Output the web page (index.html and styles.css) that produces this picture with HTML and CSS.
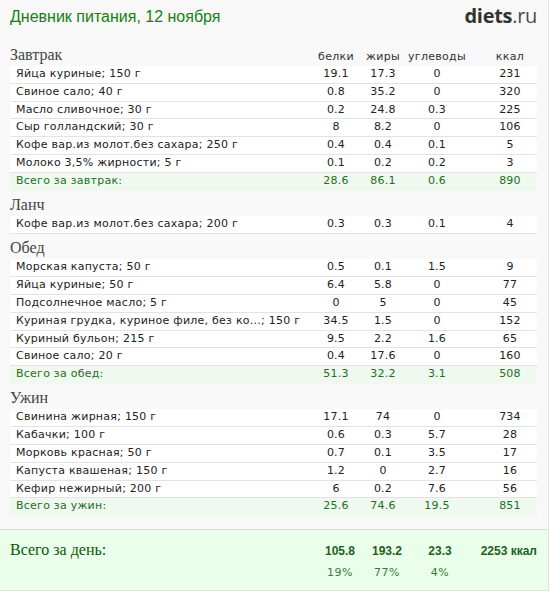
FILE: index.html
```html
<!DOCTYPE html>
<html lang="ru">
<head>
<meta charset="utf-8">
<title>Дневник питания</title>
<link rel="stylesheet" href="styles.css">
</head>
<body>
<div class="page">
  <header class="top">
    <h1 class="title">Дневник питания, 12 ноября</h1>
    <div class="logo"><b>diets</b>.ru</div>
  </header>

  <section class="meal">
    <div class="meal-head">
      <span class="meal-name">Завтрак</span>
      <span class="col">белки</span><span class="col">жиры</span><span class="col">углеводы</span><span class="col col-k">ккал</span>
    </div>
    <div class="row"><span class="name">Яйца куриные; 150 г</span><span class="col">19.1</span><span class="col">17.3</span><span class="col">0</span><span class="col col-k">231</span></div>
    <div class="row"><span class="name">Свиное сало; 40 г</span><span class="col">0.8</span><span class="col">35.2</span><span class="col">0</span><span class="col col-k">320</span></div>
    <div class="row"><span class="name">Масло сливочное; 30 г</span><span class="col">0.2</span><span class="col">24.8</span><span class="col">0.3</span><span class="col col-k">225</span></div>
    <div class="row"><span class="name">Сыр голландский; 30 г</span><span class="col">8</span><span class="col">8.2</span><span class="col">0</span><span class="col col-k">106</span></div>
    <div class="row"><span class="name">Кофе вар.из молот.без сахара; 250 г</span><span class="col">0.4</span><span class="col">0.4</span><span class="col">0.1</span><span class="col col-k">5</span></div>
    <div class="row"><span class="name">Молоко 3,5% жирности; 5 г</span><span class="col">0.1</span><span class="col">0.2</span><span class="col">0.2</span><span class="col col-k">3</span></div>
    <div class="row total"><span class="name">Всего за завтрак:</span><span class="col">28.6</span><span class="col">86.1</span><span class="col">0.6</span><span class="col col-k">890</span></div>
  </section>

  <section class="meal meal-gap">
    <div class="meal-head"><span class="meal-name">Ланч</span></div>
    <div class="row"><span class="name">Кофе вар.из молот.без сахара; 200 г</span><span class="col">0.3</span><span class="col">0.3</span><span class="col">0.1</span><span class="col col-k">4</span></div>
  </section>

  <section class="meal meal-gap">
    <div class="meal-head"><span class="meal-name">Обед</span></div>
    <div class="row"><span class="name">Морская капуста; 50 г</span><span class="col">0.5</span><span class="col">0.1</span><span class="col">1.5</span><span class="col col-k">9</span></div>
    <div class="row"><span class="name">Яйца куриные; 50 г</span><span class="col">6.4</span><span class="col">5.8</span><span class="col">0</span><span class="col col-k">77</span></div>
    <div class="row"><span class="name">Подсолнечное масло; 5 г</span><span class="col">0</span><span class="col">5</span><span class="col">0</span><span class="col col-k">45</span></div>
    <div class="row"><span class="name">Куриная грудка, куриное филе, без ко...; 150 г</span><span class="col">34.5</span><span class="col">1.5</span><span class="col">0</span><span class="col col-k">152</span></div>
    <div class="row"><span class="name">Куриный бульон; 215 г</span><span class="col">9.5</span><span class="col">2.2</span><span class="col">1.6</span><span class="col col-k">65</span></div>
    <div class="row"><span class="name">Свиное сало; 20 г</span><span class="col">0.4</span><span class="col">17.6</span><span class="col">0</span><span class="col col-k">160</span></div>
    <div class="row total"><span class="name">Всего за обед:</span><span class="col">51.3</span><span class="col">32.2</span><span class="col">3.1</span><span class="col col-k">508</span></div>
  </section>

  <section class="meal meal-gap">
    <div class="meal-head"><span class="meal-name">Ужин</span></div>
    <div class="row"><span class="name">Свинина жирная; 150 г</span><span class="col">17.1</span><span class="col">74</span><span class="col">0</span><span class="col col-k">734</span></div>
    <div class="row"><span class="name">Кабачки; 100 г</span><span class="col">0.6</span><span class="col">0.3</span><span class="col">5.7</span><span class="col col-k">28</span></div>
    <div class="row"><span class="name">Морковь красная; 50 г</span><span class="col">0.7</span><span class="col">0.1</span><span class="col">3.5</span><span class="col col-k">17</span></div>
    <div class="row"><span class="name">Капуста квашеная; 150 г</span><span class="col">1.2</span><span class="col">0</span><span class="col">2.7</span><span class="col col-k">16</span></div>
    <div class="row"><span class="name">Кефир нежирный; 200 г</span><span class="col">6</span><span class="col">0.2</span><span class="col">7.6</span><span class="col col-k">56</span></div>
    <div class="row total"><span class="name">Всего за ужин:</span><span class="col">25.6</span><span class="col">74.6</span><span class="col">19.5</span><span class="col col-k">851</span></div>
  </section>

  <footer class="day">
    <div class="day-line">
      <span class="day-name">Всего за день:</span>
      <span class="dcol">105.8</span><span class="dcol">193.2</span><span class="dcol">23.3</span><span class="dcol dcol-k">2253 ккал</span>
    </div>
    <div class="day-line pct-line">
      <span></span>
      <span class="pcol">19%</span><span class="pcol">77%</span><span class="pcol">4%</span><span></span>
    </div>
  </footer>
</div>
</body>
</html>
```

FILE: styles.css
```css
html, body {
  margin: 0;
  padding: 0;
  background: #ffffff;
}

.page {
  box-sizing: border-box;
  width: 549px;
  height: 591px;
  background: #f8f8f8;
  border-right: 1px solid #e0e0e0;
  border-bottom: 1px solid #e0e0e0;
  display: flex;
  flex-direction: column;
  font-family: "DejaVu Sans", Verdana, sans-serif;
  font-size: 11px;
  color: #222;
}

.top {
  height: 40px;
  display: flex;
  justify-content: space-between;
  align-items: flex-start;
  padding: 0 11px 0 10px;
}

.title {
  margin: 0;
  padding-top: 7px;
  font-family: "Liberation Sans", Arial, sans-serif;
  font-weight: normal;
  font-size: 16px;
  line-height: 19px;
  color: #118211;
}

.logo {
  padding-top: 4px;
  font-family: "Open Sans", "Liberation Sans", sans-serif;
  font-size: 20px;
  line-height: 24px;
  color: #4a4a4a;
  letter-spacing: -0.3px;
}

.logo b {
  font-weight: 700;
  color: #333;
}

.meal {
  margin: 7px 0 0 10px;
  width: 527px;
}

.meal-gap {
  margin-top: 0;
}

.meal-head {
  box-sizing: border-box;
  height: 19px;
  display: grid;
  grid-template-columns: 1fr 50px 44px 64px 68px;
  align-items: baseline;
}

.meal-gap .meal-head {
  height: 25.5px;
  padding-top: 6.5px;
}

.meal-name {
  font-family: "Liberation Serif", "Times New Roman", serif;
  font-size: 16px;
  line-height: 16px;
  color: #444;
}

.meal-head .col {
  color: #333;
  letter-spacing: 0.3px;
}

.row {
  display: grid;
  grid-template-columns: 1fr 50px 44px 64px 68px;
  align-items: baseline;
  background: #fff;
  border-bottom: 1px solid #e3e3e3;
  line-height: 15px;
  padding-bottom: 1.8px;
  letter-spacing: 0.25px;
}

.name {
  padding-left: 6px;
  white-space: nowrap;
  overflow: hidden;
}

.col {
  text-align: center;
  white-space: nowrap;
}

.col-k {
  padding-left: 14px;
}

.row.total {
  background: #eff9ef;
  border-bottom-color: #eff9ef;
  color: #1e6e1e;
}

.day {
  margin-top: auto;
  box-sizing: border-box;
  height: 61px;
  background: #eaffea;
  border-top: 1px solid #dcdcdc;
  padding: 11px 11px 0 10px;
}

.day-line {
  display: grid;
  grid-template-columns: 1fr 50px 44px 62px 66px;
  align-items: baseline;
}

.day-name {
  font-family: "Liberation Serif", "Times New Roman", serif;
  font-size: 16px;
  line-height: 18px;
  color: #0c560c;
}

.dcol {
  font-family: "Liberation Sans", Arial, sans-serif;
  font-weight: bold;
  font-size: 12px;
  color: #1f5f1f;
  text-align: center;
  white-space: nowrap;
}

.dcol-k {
  text-align: right;
}

.pct-line {
  margin-top: 7px;
  line-height: 14px;
}

.pcol {
  text-align: center;
  color: #3a7a3a;
  letter-spacing: 0.5px;
}
```
